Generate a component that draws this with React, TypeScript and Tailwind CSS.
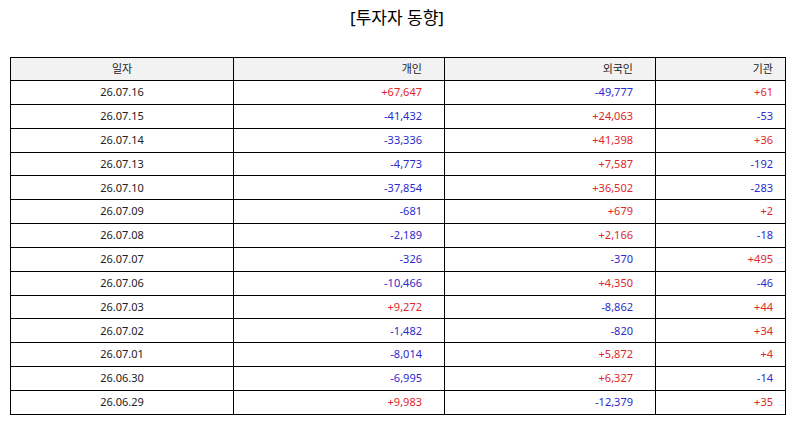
const rows: [string, string, string, string][] = [
  ["26.07.16", "+67,647", "-49,777", "+61"],
  ["26.07.15", "-41,432", "+24,063", "-53"],
  ["26.07.14", "-33,336", "+41,398", "+36"],
  ["26.07.13", "-4,773", "+7,587", "-192"],
  ["26.07.10", "-37,854", "+36,502", "-283"],
  ["26.07.09", "-681", "+679", "+2"],
  ["26.07.08", "-2,189", "+2,166", "-18"],
  ["26.07.07", "-326", "-370", "+495"],
  ["26.07.06", "-10,466", "+4,350", "-46"],
  ["26.07.03", "+9,272", "-8,862", "+44"],
  ["26.07.02", "-1,482", "-820", "+34"],
  ["26.07.01", "-8,014", "+5,872", "+4"],
  ["26.06.30", "-6,995", "+6,327", "-14"],
  ["26.06.29", "+9,983", "-12,379", "+35"],
];

function tone(v: string) {
  return v.startsWith("+") ? "text-[#e0262b]" : "text-[#2b2bd0]";
}

export default function App() {
  return (
    <div className="w-[794px] h-[425px] bg-white text-[#222] font-['Noto_Sans','Noto_Sans_CJK_KR',sans-serif]">
      <h1 className="pt-[4px] text-center text-[17px] leading-[27px] text-black">
        [투자자 동향]
      </h1>

      <table className="mt-[26px] ml-[10px] w-[775px] border-collapse table-fixed text-[11px]">
        <colgroup>
          <col className="w-[223px]" />
          <col className="w-[211px]" />
          <col className="w-[211px]" />
          <col className="w-[130px]" />
        </colgroup>
        <thead>
          <tr className="h-[23px] bg-[#f2f2f2]">
            <th className="border border-black font-normal text-center">일자</th>
            <th className="border border-black font-normal text-right pr-[22px]">개인</th>
            <th className="border border-black font-normal text-right pr-[22px]">외국인</th>
            <th className="border border-black font-normal text-right pr-[12px]">기관</th>
          </tr>
        </thead>
        <tbody>
          {rows.map(([date, ind, fgn, inst]) => (
            <tr key={date} className="h-[23.85px]">
              <td className="border border-black text-center">{date}</td>
              <td className={`border border-black text-right pr-[22px] ${tone(ind)}`}>{ind}</td>
              <td className={`border border-black text-right pr-[22px] ${tone(fgn)}`}>{fgn}</td>
              <td className={`border border-black text-right pr-[12px] ${tone(inst)}`}>{inst}</td>
            </tr>
          ))}
        </tbody>
      </table>
    </div>
  );
}
